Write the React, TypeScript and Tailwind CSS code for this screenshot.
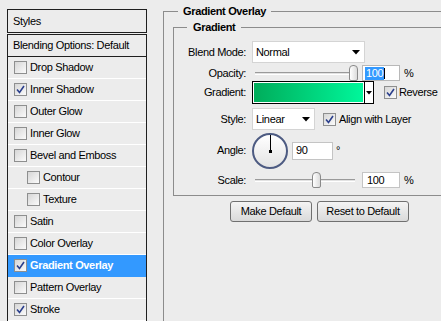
import React from "react";

const font = "font-['Liberation_Sans','Arial',sans-serif]";

function Check({ checked }: { checked: boolean }) {
    return (
        <span className="w-[13px] h-[13px] shrink-0 border border-[#8e8f8f] bg-gradient-to-br from-[#d6d6d6] to-[#fbfbfb] flex items-center justify-center">
            {checked && (
                <svg width="9" height="9" viewBox="0 0 9 9">
                    <path d="M1 4.5 L3.5 7.5 L8 1" fill="none" stroke="#2b3f8c" strokeWidth="1.6" />
                </svg>
            )}
        </span>
    );
}

function Arrow() {
    return (
        <svg width="8" height="5" viewBox="0 0 8 5" className="shrink-0">
            <path d="M0 0 H8 L4 4.5 Z" fill="#000" />
        </svg>
    );
}

function Slider({ at }: { at: number }) {
    return (
        <div className="relative w-[106px] h-[16px]">
            <div className="absolute left-[3px] right-[3px] top-[7px] h-[3px] border-t border-[#9a9a9a] bg-[#e2e2e2] border-b border-b-white" />
            <div
                className="absolute top-0 w-[9px] h-[16px] rounded-t-[4px] rounded-b-[2px] border border-[#8a8a8a] bg-gradient-to-r from-white to-[#dcdcdc]"
                style={{ left: at }}
            />
        </div>
    );
}

const layers = [
    { name: "Drop Shadow", on: false },
    { name: "Inner Shadow", on: true },
    { name: "Outer Glow", on: false },
    { name: "Inner Glow", on: false },
    { name: "Bevel and Emboss", on: false },
    { name: "Contour", on: false, sub: true },
    { name: "Texture", on: false, sub: true },
    { name: "Satin", on: false },
    { name: "Color Overlay", on: false },
    { name: "Gradient Overlay", on: true, active: true },
    { name: "Pattern Overlay", on: false },
    { name: "Stroke", on: true },
];

export default function App() {
    return (
        <div className={`w-[441px] h-[321px] overflow-hidden bg-[#ececec] flex text-[11px] leading-[13px] tracking-[-0.35px] text-black ${font}`}>
            {/* left list of styles */}
            <div className="ml-[7px] mt-[9px] w-[140px] shrink-0 flex flex-col">
                <div className="h-[24px] border border-[#1f1f1f] pl-[5px] flex items-center">Styles</div>
                <div className="mt-[1px] border-x border-t border-[#1f1f1f] flex flex-col">
                    <div className="h-[22px] border-b border-[#1f1f1f] pl-[5px] flex items-center">Blending Options: Default</div>
                    {layers.map((l) => (
                        <div
                            key={l.name}
                            className={`h-[22px] border-b flex items-center gap-[3px] ${l.sub ? "pl-[19px]" : "pl-[6px]"} ${
                                l.active ? "bg-[#3399ff] border-[#3399ff] text-white font-bold" : "border-white"
                            }`}
                        >
                            <Check checked={l.on} />
                            <span>{l.name}</span>
                        </div>
                    ))}
                </div>
            </div>

            {/* right settings */}
            <fieldset className="ml-[16px] mt-[4px] w-[300px] h-[400px] shrink-0 border border-[#8c8c8c]">
                <legend className="ml-[14px] px-[5px] font-bold leading-[14px]">Gradient Overlay</legend>

                <fieldset className="ml-[9px] mt-[2px] w-[290px] border border-[#8c8c8c] pt-[7px] pb-[7px]">
                    <legend className="ml-[13px] px-[6px] font-bold leading-[14px]">Gradient</legend>

                    <div className="flex items-center h-[22px]">
                        <span className="w-[72px] text-right">Blend Mode:</span>
                        <div className="ml-[6px] w-[113px] h-[22px] bg-white border border-[#d4d4d4] flex items-center justify-between pl-[3px] pr-[4px]">
                            <span>Normal</span>
                            <Arrow />
                        </div>
                    </div>

                    <div className="flex items-center h-[16px] mt-[2px]">
                        <span className="w-[72px] text-right">Opacity:</span>
                        <div className="ml-[6px]">
                            <Slider at={97} />
                        </div>
                        <div className="ml-[4px] w-[38px] h-[16px] bg-white border border-[#b8b8b8] flex items-center pl-[2px]">
                            <span className="bg-[#3399ff] text-white px-[1px]">100</span>
                            <span className="w-px h-[11px] bg-black" />
                        </div>
                        <span className="ml-[4px]">%</span>
                    </div>

                    <div className="flex items-center h-[23px]">
                        <span className="w-[72px] text-right">Gradient:</span>
                        <div className="ml-[6px] w-[122px] h-[23px] border border-black flex">
                            <div className="flex-1 border border-white bg-gradient-to-r from-[#00ad5b] to-[#00f79b]" />
                            <div className="w-[9px] border-l border-black bg-white flex items-center justify-center">
                                <svg width="6" height="4" viewBox="0 0 6 4">
                                    <path d="M0 0 H6 L3 3.5 Z" fill="#000" />
                                </svg>
                            </div>
                        </div>
                        <div className="ml-[10px] flex items-center gap-[2px]">
                            <Check checked />
                            <span>Reverse</span>
                        </div>
                    </div>

                    <div className="flex items-center h-[22px] mt-[4px]">
                        <span className="w-[72px] text-right">Style:</span>
                        <div className="ml-[6px] w-[63px] h-[22px] bg-white border border-[#d4d4d4] flex items-center justify-between pl-[3px] pr-[4px]">
                            <span>Linear</span>
                            <Arrow />
                        </div>
                        <div className="ml-[8px] flex items-center gap-[3px]">
                            <Check checked />
                            <span>Align with Layer</span>
                        </div>
                    </div>

                    <div className="flex items-center h-[37px] mt-[2px]">
                        <span className="w-[72px] text-right">Angle:</span>
                        <div className="ml-[6px] w-[36px] h-[36px] rounded-full border-2 border-[#4d5b82] bg-gradient-to-b from-white to-[#e4e4e4] flex flex-col items-center">
                            <span className="w-px h-[16px] bg-black" />
                            <span className="w-[3px] h-[3px] bg-black -mt-[1px]" />
                        </div>
                        <div className="ml-[4px] w-[41px] h-[18px] bg-white border border-[#c4c4c4] flex items-center pl-[3px]">90</div>
                        <span className="ml-[3px] self-start mt-[12px]">°</span>
                    </div>

                    <div className="flex items-center h-[16px] mt-[3px]">
                        <span className="w-[72px] text-right">Scale:</span>
                        <div className="ml-[6px]">
                            <Slider at={60} />
                        </div>
                        <div className="ml-[4px] w-[38px] h-[16px] bg-white border border-[#c4c4c4] flex items-center pl-[4px]">100</div>
                        <span className="ml-[4px]">%</span>
                    </div>
                </fieldset>

                <div className="flex gap-[5px] ml-[66px] mt-[5px]">
                    <button className="w-[82px] h-[21px] rounded-[3px] border border-[#707070] bg-gradient-to-b from-[#f4f4f4] to-[#dadada]">
                        Make Default
                    </button>
                    <button className="w-[92px] h-[21px] rounded-[3px] border border-[#707070] bg-gradient-to-b from-[#f4f4f4] to-[#dadada]">
                        Reset to Default
                    </button>
                </div>
            </fieldset>
        </div>
    );
}
